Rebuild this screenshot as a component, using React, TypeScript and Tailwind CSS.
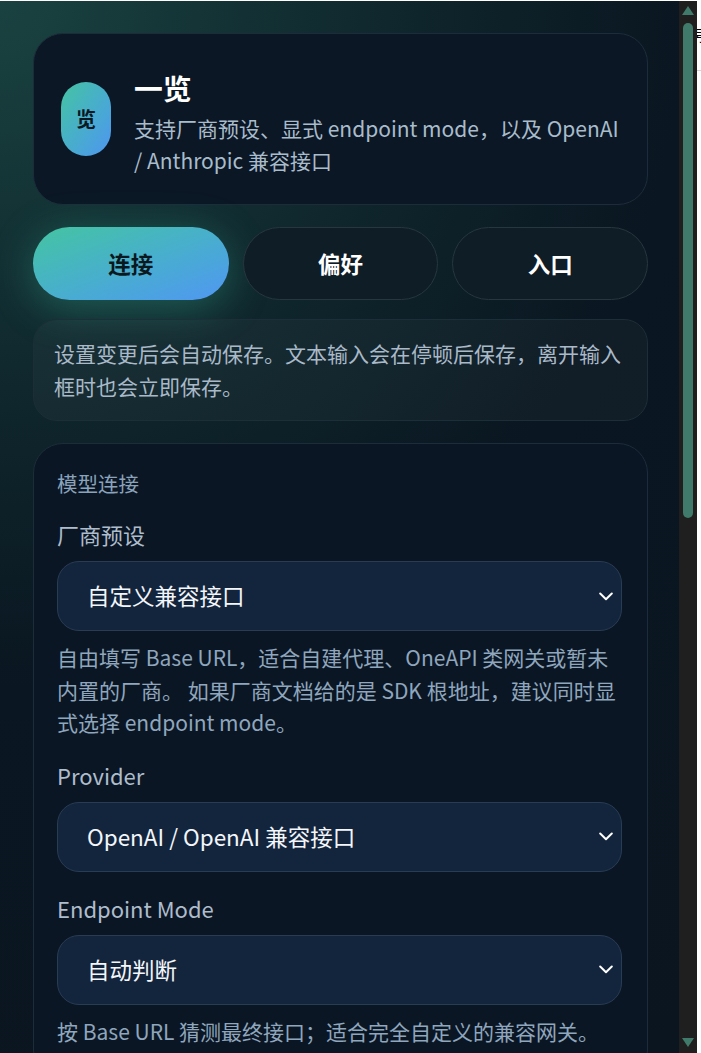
const tabs = ["连接", "偏好", "入口"];

const Chevron = () => (
  <svg width="14" height="9" viewBox="0 0 14 9" fill="none" className="shrink-0">
    <polyline points="1.2,1.5 7,7.2 12.8,1.5" stroke="#ffffff" strokeWidth="2" strokeLinecap="round" strokeLinejoin="round" />
  </svg>
);

const Select = ({ value }: { value: string }) => (
  <button
    type="button"
    className="flex h-[70px] w-full items-center justify-between rounded-[22px] border border-[#283c54] bg-[#13253d] pl-[29px] pr-[8px] text-left text-[22.5px] text-[#f3f6fa]"
  >
    <span>{value}</span>
    <Chevron />
  </button>
);

const Field = ({
  label,
  children,
  help,
}: {
  label: string;
  children: React.ReactNode;
  help?: string;
}) => (
  <div className="flex flex-col">
    <label className="mb-[10px] text-[22px] leading-[33px] text-[#aebdcc]">{label}</label>
    {children}
    {help && <p className="mt-[10px] text-[21px] leading-[32.5px] text-[#8fa6bd]">{help}</p>}
  </div>
);

export default function App() {
  return (
    <div className="flex h-[1053px] w-full bg-white pt-px font-['Noto_Sans_CJK_SC','Noto_Sans',sans-serif]">
      {/* Panel */}
      <div className="h-[1052px] w-[679px] shrink-0 overflow-hidden bg-[#0a1520] bg-[radial-gradient(circle_at_0%_0%,#1a4241_0%,#143436_16%,#0e232a_36%,#0a1621_55%,#0a1520_100%)]">
        <div className="flex flex-col pl-[33px] pr-[31px] pt-8">
          {/* Header */}
          <div className="flex items-start gap-[23px] rounded-[30px] border border-[#1d2c3b] bg-[#0b1725] pb-[28px] pl-[27px] pr-6 pt-[37px]">
            <div className="mt-[11px] flex h-[74px] w-[50px] shrink-0 items-center justify-center rounded-full bg-gradient-to-br from-[#46c3a0] to-[#4f95f0] text-[20px] font-bold text-[#0b1a22]">
              览
            </div>
            <div className="flex flex-col">
              <h1 className="text-[28.8px] font-bold leading-[34px] text-white">一览</h1>
              <p className="mt-[7px] text-[21px] leading-[32px] text-[#a9bccb]">
                支持厂商预设、显式 endpoint mode，以及 OpenAI / Anthropic 兼容接口
              </p>
            </div>
          </div>

          {/* Tabs */}
          <div className="mt-[22px] grid grid-cols-3 gap-[14px]">
            {tabs.map((t, i) =>
              i === 0 ? (
                <button
                  key={t}
                  className="h-[73px] rounded-full bg-gradient-to-br from-[#45c4a0] to-[#5096f2] text-[22.5px] font-bold text-[#0a1820] shadow-[0_8px_40px_rgba(60,190,160,0.35)]"
                >
                  {t}
                </button>
              ) : (
                <button
                  key={t}
                  className="h-[73px] rounded-full border border-[#27363f] bg-[#0f1d27] text-[22.5px] font-bold text-white"
                >
                  {t}
                </button>
              )
            )}
          </div>

          {/* Note */}
          <div className="mt-[19px] rounded-[24px] border border-[#1c2e37] bg-white/[0.03] px-5 py-[17px] text-[21px] leading-[33px] text-[#a9b9c8]">
            设置变更后会自动保存。文本输入会在停顿后保存，离开输入框时也会立即保存。
          </div>

          {/* Model connection */}
          <div className="mt-[22px] flex flex-col gap-5 rounded-[30px] border border-[#1d2c3b] bg-[#0b1624] pb-8 pl-[23px] pr-[25px] pt-6">
            <h2 className="text-[20.5px] leading-[30px] text-[#8aa3bb]">模型连接</h2>
            <Field
              label="厂商预设"
              help="自由填写 Base URL，适合自建代理、OneAPI 类网关或暂未内置的厂商。 如果厂商文档给的是 SDK 根地址，建议同时显式选择 endpoint mode。"
            >
              <Select value="自定义兼容接口" />
            </Field>
            <Field label="Provider">
              <Select value="OpenAI / OpenAI 兼容接口" />
            </Field>
            <Field label="Endpoint Mode" help="按 Base URL 猜测最终接口；适合完全自定义的兼容网关。">
              <Select value="自动判断" />
            </Field>
          </div>
        </div>
      </div>

      {/* Scrollbar */}
      <div className="flex h-[1052px] w-[18px] shrink-0 flex-col items-center bg-[#1f1f1f] pb-[6px] pt-[5px]">
        <svg width="12" height="9" viewBox="0 0 12 9">
          <polygon points="6,0 12,9 0,9" fill="#3f7a6a" />
        </svg>
        <div className="mt-[8px] h-[495px] w-[10px] rounded-full bg-[#3f7a6a]" />
        <div className="flex-1" />
        <svg width="12" height="9" viewBox="0 0 12 9">
          <polygon points="0,0 12,0 6,9" fill="#3f7a6a" />
        </svg>
      </div>

      {/* Page behind */}
      <div className="flex-1 overflow-hidden bg-white">
        <div className="-ml-[4px] mt-[26px] whitespace-nowrap text-[15px] leading-none text-black">号</div>
        <div className="mt-[28px] h-px w-[20px] bg-gray-300" />
      </div>
    </div>
  );
}
